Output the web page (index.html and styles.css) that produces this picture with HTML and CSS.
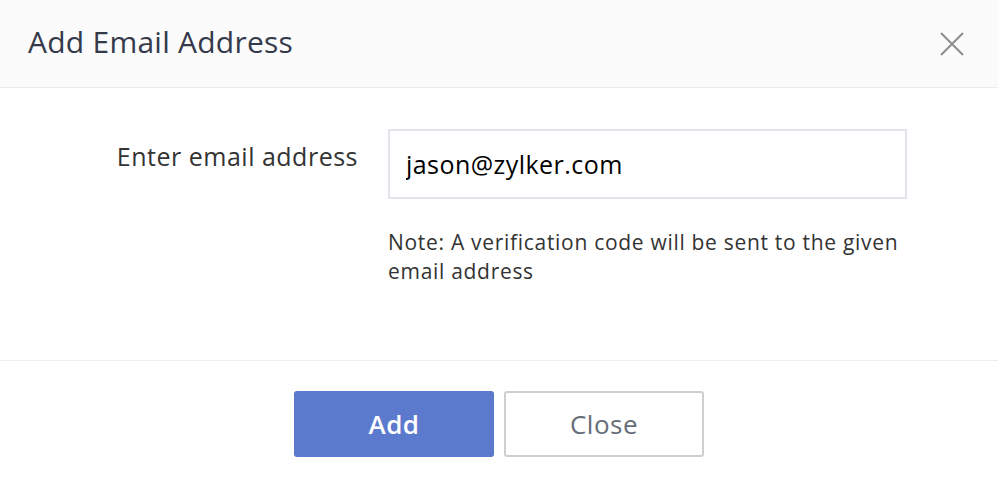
FILE: index.html
```html
<!DOCTYPE html>
<html lang="en">
<head>
<meta charset="utf-8">
<title>Add Email Address</title>
<link rel="stylesheet" href="styles.css">
</head>
<body>
<div class="dialog">
  <header class="dlg-head">
    <h1 class="dlg-title">Add Email Address</h1>
    <button class="dlg-close" aria-label="Close">
      <svg width="24" height="24" viewBox="0 0 24 24"><path d="M1 1L23 23M23 1L1 23" stroke="#8c8c8c" stroke-width="2" fill="none"/></svg>
    </button>
  </header>
  <section class="dlg-body">
    <div class="field-row">
      <label class="field-label" for="email">Enter email address</label>
      <div class="field-main">
        <input id="email" class="field-input" type="text" value="jason@zylker.com">
        <p class="field-note">Note: A verification code will be sent to the given email address</p>
      </div>
    </div>
  </section>
  <footer class="dlg-foot">
    <button class="btn btn-primary">Add</button>
    <button class="btn btn-secondary">Close</button>
  </footer>
</div>
</body>
</html>
```
FILE: styles.css
```css
* { box-sizing: border-box; }
html, body { margin: 0; padding: 0; background: #fff; }
body { font-family: "Open Sans", "Noto Sans", sans-serif; color: #333; }
.dialog { width: 998px; height: 486px; display: flex; flex-direction: column; }
.dlg-head {
  height: 88px;
  background: #fbfbfc;
  border-bottom: 1px solid #ececee;
  display: flex;
  align-items: center;
  justify-content: space-between;
  padding: 0 34px 0 28px;
}
.dlg-title { margin: 0 0 4px; font-size: 30px; letter-spacing: 0.25px; font-weight: 400; color: #353a4a; line-height: 1; }
.dlg-close { background: none; border: 0; padding: 0; width: 24px; height: 24px; display: block; cursor: pointer; }
.dlg-close svg { display: block; }
.dlg-body { height: 273px; border-bottom: 1px solid #ececee; padding-top: 41px; }
.field-row { display: grid; grid-template-columns: 358px 519px; column-gap: 30px; }
.field-label { text-align: right; font-size: 25px; letter-spacing: 0.5px; padding-top: 12px; color: #333; line-height: 30px; }
.field-input {
  display: block;
  width: 519px; height: 70px;
  border: 2px solid #e3e3ea;
  border-radius: 0;
  padding: 0 16px;
  font-family: inherit;
  font-size: 25px;
  letter-spacing: 0.45px;
  color: #000;
  outline: none;
  background: #fff;
}
.field-note { margin: 29px 0 0; font-size: 21px; letter-spacing: 0.7px; line-height: 29px; color: #333; }
.dlg-foot { display: flex; justify-content: center; gap: 10px; padding-top: 30px; }
.btn { width: 200px; height: 66px; border-radius: 3px; font-family: inherit; font-size: 26px; letter-spacing: 0.5px; cursor: pointer; }
.btn-primary { background: #5b79cd; color: #fff; border: 0; font-weight: 600; }
.btn-secondary { background: #fff; color: #676d78; border: 2px solid #cfcfcf; }
```
